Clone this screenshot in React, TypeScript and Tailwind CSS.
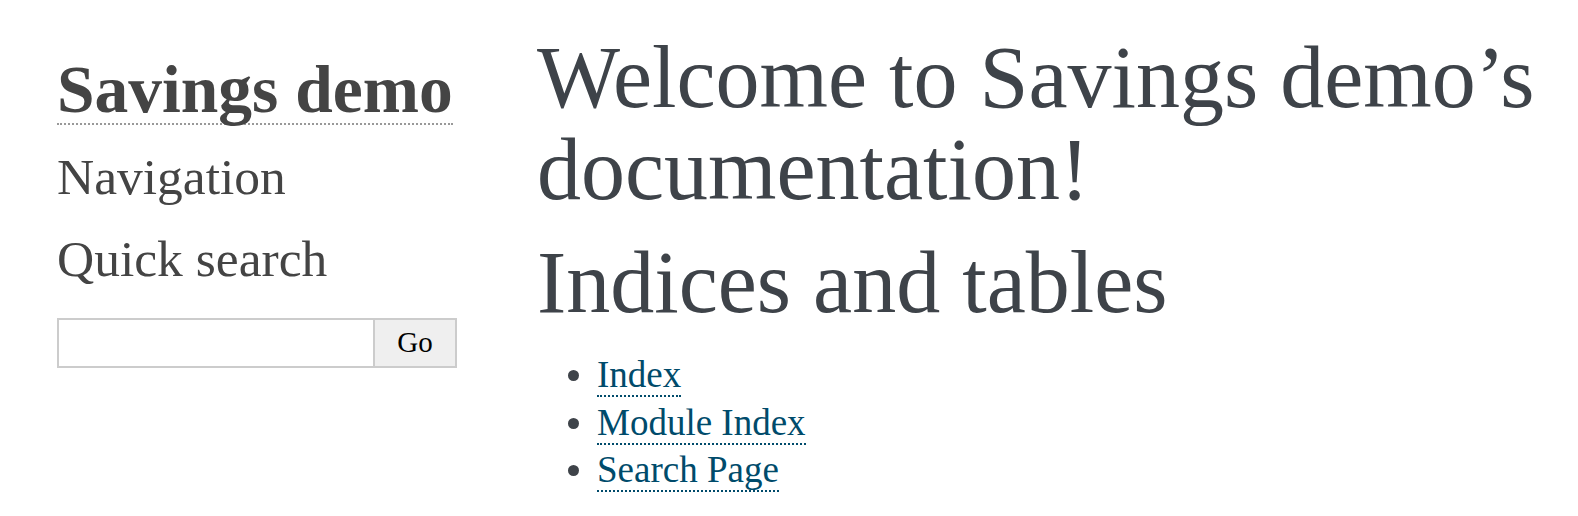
import { useState } from "react";

const serif = "font-['Liberation_Serif','Times_New_Roman',serif]";

function Sidebar() {
  const [query, setQuery] = useState("");

  return (
    <div className="w-[537px] shrink-0 pl-[57px] pt-[57px] text-[#444]">
      <div className="w-fit border-b-2 border-dotted border-[#999] text-[67.5px] font-bold leading-[66px]">
        Savings demo
      </div>
      <h3 className="mt-[22px] text-[51.5px] leading-[60px]">Navigation</h3>
      <h3 className="mt-[22px] text-[51.5px] leading-[60px]">Quick search</h3>
      <form className="mt-[29px] flex h-[50px]" onSubmit={(e) => e.preventDefault()}>
        <input
          value={query}
          onChange={(e) => setQuery(e.target.value)}
          className="h-full w-[318px] border-2 border-[#ccc] bg-white px-2 text-[29px] outline-none"
        />
        <button
          type="submit"
          className="h-full w-[82px] border-2 border-l-0 border-[#ccc] bg-[#efefef] text-[29px] text-black"
        >
          Go
        </button>
      </form>
    </div>
  );
}

const links = ["Index", "Module Index", "Search Page"];

export default function App() {
  return (
    <div className={`flex min-h-[516px] bg-white ${serif}`}>
      <Sidebar />
      <div className="pt-[32px] text-[#3E4349]">
        <h1 className="text-[88px] leading-[92px]">
          Welcome to Savings demo’s documentation!
        </h1>
        <h1 className="mt-[21px] text-[88px] leading-[92px]">Indices and tables</h1>
        <ul className="mt-[22px] list-disc pl-[60px] text-[37px] leading-[47.5px]">
          {links.map((l) => (
            <li key={l}>
              <a href="#" className="border-b-2 border-dotted border-[#004B6B] text-[#004B6B]">
                {l}
              </a>
            </li>
          ))}
        </ul>
      </div>
    </div>
  );
}
